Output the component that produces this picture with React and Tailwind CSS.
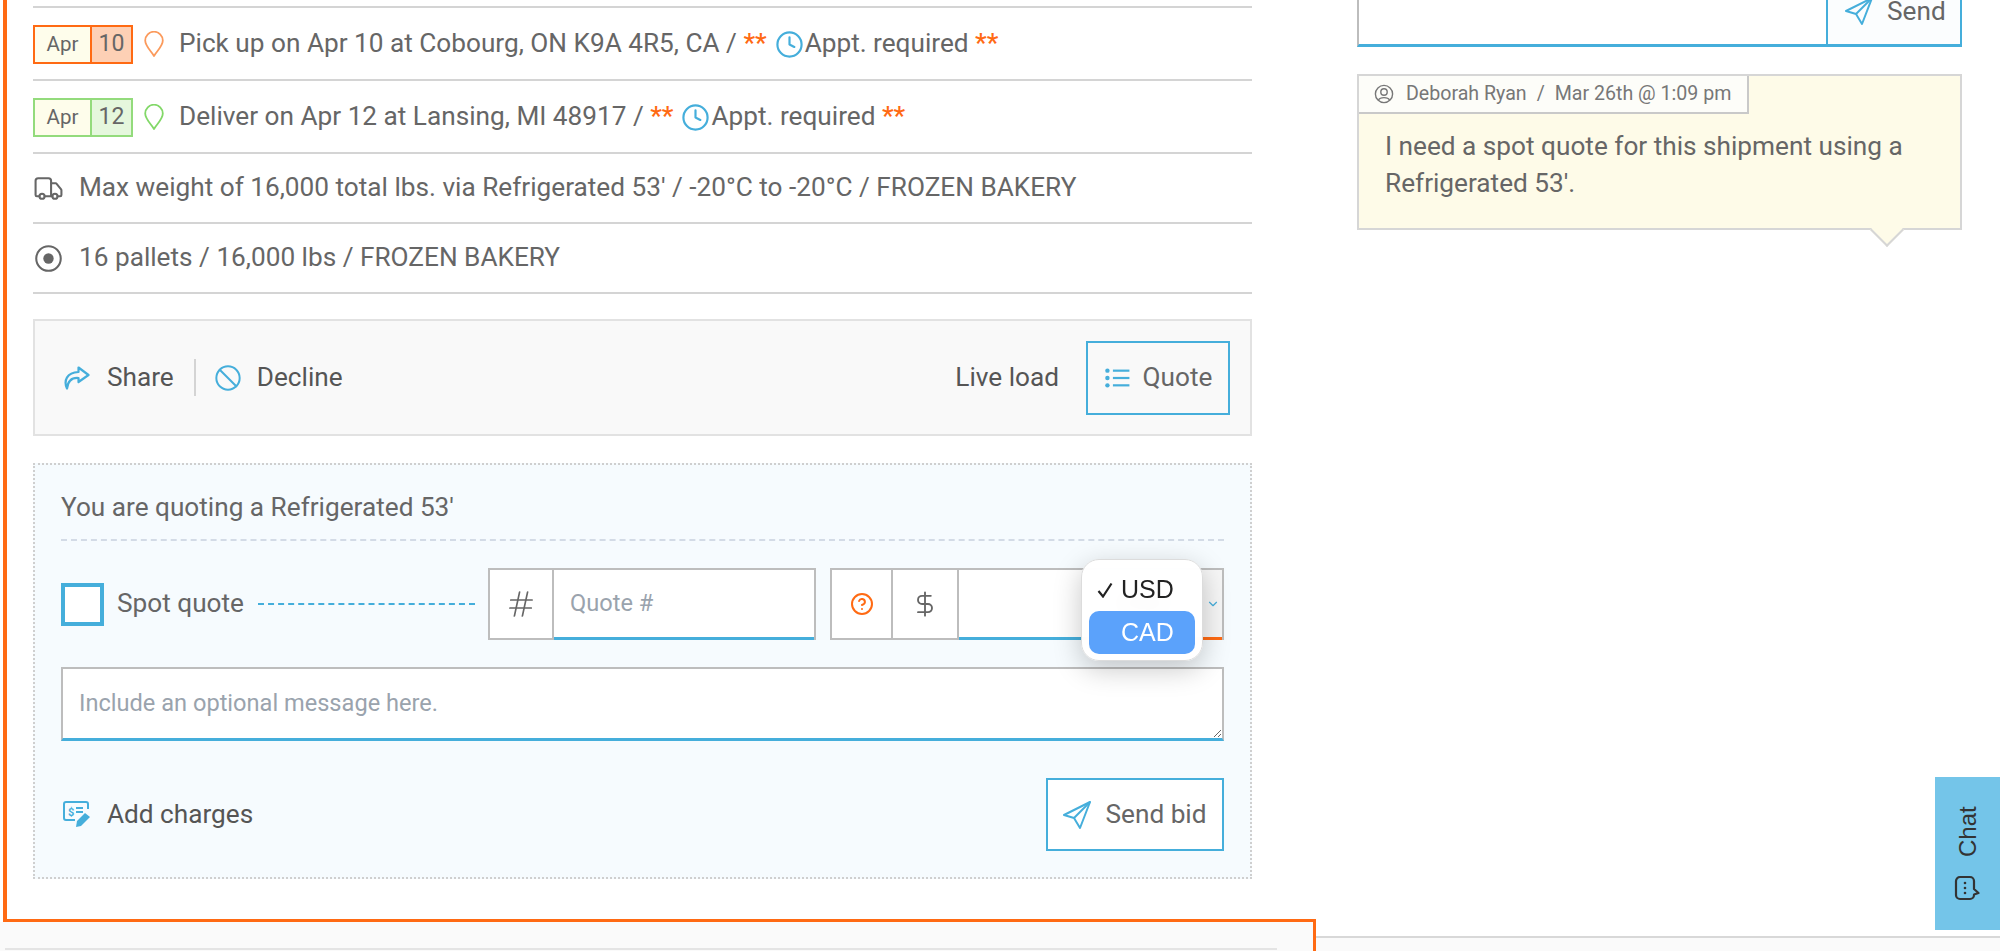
import { Ban, Clock, DollarSign, Hash, CircleHelp, ChevronDown, Truck } from "lucide-react";

function Pin({ className }) {
  return (
    <svg viewBox="0 0 20 26" fill="none" stroke="currentColor" strokeWidth="1.8" className={className}>
      <path d="M10 25 C7 20 1.2 15 1.2 9.5 A8.8 8.8 0 0 1 18.8 9.5 C18.8 15 13 20 10 25 Z" strokeLinejoin="round" />
    </svg>
  );
}

function Plane({ className }) {
  return (
    <svg viewBox="0 0 28 28" fill="none" stroke="currentColor" strokeWidth="2" strokeLinejoin="round" className={className}>
      <path d="M27 1 L1 14 L11 17 L17 27 Z" />
      <path d="M27 1 L11 17" />
    </svg>
  );
}

function ShareArrow({ className }) {
  return (
    <svg viewBox="0 0 26 24" fill="none" stroke="currentColor" strokeWidth="2.2" strokeLinejoin="round" className={className}>
      <path d="M15 1.5 L25 9 L15 16 V12 C9 11.5 4.5 14 3.5 22.5 C0 15 3 6.5 15 6 Z" />
    </svg>
  );
}

function Target({ className }) {
  return (
    <svg viewBox="0 0 26 26" className={className}>
      <circle cx="13" cy="13" r="11.8" fill="none" stroke="currentColor" strokeWidth="2" />
      <circle cx="13" cy="13" r="5" fill="currentColor" />
    </svg>
  );
}

function ListIcon({ className }) {
  return (
    <svg viewBox="0 0 28 24" fill="currentColor" className={className}>
      <circle cx="3" cy="4" r="2.4" />
      <circle cx="3" cy="12" r="2.4" />
      <circle cx="3" cy="20" r="2.4" />
      <rect x="9" y="2.8" width="18" height="2.4" />
      <rect x="9" y="10.8" width="18" height="2.4" />
      <rect x="9" y="18.8" width="18" height="2.4" />
    </svg>
  );
}

function ChargesIcon({ className }) {
  return (
    <svg viewBox="0 0 30 27" fill="none" stroke="currentColor" className={className}>
      <path d="M12 19 H3 A2 2 0 0 1 1 17 V3 A2 2 0 0 1 3 1 H23 A2 2 0 0 1 25 3 V8" strokeWidth="2" />
      <text x="5" y="15" fontSize="11" fontWeight="700" fill="currentColor" stroke="none" fontFamily="Roboto, sans-serif">$</text>
      <path d="M13 7 H20 M13 11 H20" strokeWidth="2" />
      <path d="M22 12 L27 16 L18 25 L13 26 L14 20 Z" fill="currentColor" stroke="none" />
    </svg>
  );
}

function UserCircle({ className }) {
  return (
    <svg viewBox="0 0 20 20" fill="none" stroke="currentColor" strokeWidth="1.4" className={className}>
      <circle cx="10" cy="10" r="8.6" />
      <circle cx="10" cy="8" r="3.2" />
      <path d="M4.5 16 C6 12.8 14 12.8 15.5 16" />
    </svg>
  );
}

function ChatBubble({ className }) {
  return (
    <svg viewBox="0 0 26 26" fill="none" stroke="currentColor" strokeWidth="2.2" strokeLinejoin="round" className={className}>
      <path d="M6 2 H16 A4 4 0 0 1 20 6 V14 L24.5 18 L20 19.5 V20 A4 4 0 0 1 16 24 H6 A4 4 0 0 1 2 20 V6 A4 4 0 0 1 6 2 Z" />
      <circle cx="11" cy="8" r="1.3" fill="currentColor" stroke="none" />
      <circle cx="11" cy="13" r="1.3" fill="currentColor" stroke="none" />
      <circle cx="11" cy="18" r="1.3" fill="currentColor" stroke="none" />
    </svg>
  );
}

function Stars() {
  return <span className="text-[#ff6a13] font-medium">**</span>;
}

function DateBox({ day, outline, fill }) {
  return (
    <div className={`flex h-[39px] w-[100px] shrink-0 border-2 ${outline}`}>
      <span className={`flex w-[57px] items-center justify-center border-r-2 bg-[#fefdeb] text-[20.5px] ${outline}`}>Apr</span>
      <span className={`flex flex-1 items-center justify-center text-[23px] ${fill}`}>{day}</span>
    </div>
  );
}

function StopRow({ day, outline, fill, pin, text }) {
  return (
    <div className="flex h-[73px] items-center border-b-2 border-[#d4d4d4] pt-[1px]">
      <DateBox day={day} outline={outline} fill={fill} />
      <Pin className={`ml-[11px] h-[26px] w-[20px] shrink-0 ${pin}`} />
      <span className="ml-[15px]">{text} / <Stars /></span>
      <Clock className="ml-[8px] h-[29px] w-[29px] text-[#45aedb]" strokeWidth={1.8} />
      <span className="ml-[1px]">Appt. required <Stars /></span>
    </div>
  );
}

function InfoRow({ icon, children }) {
  return (
    <div className="flex h-[70px] items-center gap-[15px] border-b-2 border-[#d4d4d4]">
      {icon}
      <span>{children}</span>
    </div>
  );
}

export default function App() {
  return (
    <div className="flex h-[951px] w-[2000px] overflow-hidden bg-white font-['Roboto',sans-serif] text-[26.2px] text-[#666]">
      <div className="flex w-[1316px] shrink-0 flex-col">
        <main className="ml-[3px] h-[922px] shrink-0 border-b-[3px] border-l-4 border-[#ff6a13] pl-[26px] pr-[64px] pt-[6px]">
          <div className="border-t-2 border-[#d4d4d4]">
            <StopRow day="10" outline="border-[#ff6a13]" fill="bg-[#fdd0b5]" pin="text-[#fb9a5c]" text="Pick up on Apr 10 at Cobourg, ON K9A 4R5, CA" />
            <StopRow day="12" outline="border-[#93db7c]" fill="bg-[#e5f7dd]" pin="text-[#82d868]" text="Deliver on Apr 12 at Lansing, MI 48917" />
            <InfoRow icon={<Truck className="h-[31px] w-[31px] shrink-0" strokeWidth={1.6} />}>
              Max weight of 16,000 total lbs. via Refrigerated 53' / -20°C to -20°C / FROZEN BAKERY
            </InfoRow>
            <InfoRow icon={<Target className="ml-[2px] mr-[2px] h-[27px] w-[27px] shrink-0" />}>
              16 pallets / 16,000 lbs / FROZEN BAKERY
            </InfoRow>
          </div>

          <div className="mt-[25px] flex h-[117px] items-center border-2 border-[#e2e2e2] bg-[#f9f9f9] pl-[28px] pr-[20px] text-[#555]">
            <ShareArrow className="h-[24px] w-[27px] text-[#45aedb]" />
            <span className="ml-[17px]">Share</span>
            <div className="ml-[20px] h-[37px] w-[2px] bg-[#d4d4d4]" />
            <Ban className="ml-[18px] h-[28px] w-[28px] text-[#45aedb]" strokeWidth={1.7} />
            <span className="ml-[15px]">Decline</span>
            <span className="ml-auto">Live load</span>
            <button className="ml-[27px] flex h-[74px] w-[144px] items-center justify-center gap-[12px] border-2 border-[#45aedb] text-[#666]">
              <ListIcon className="h-[22px] w-[27px] text-[#45aedb]" />
              Quote
            </button>
          </div>

          <section className="mt-[27px] h-[416px] border-2 border-dotted border-[#cfcfcf] bg-[#f6fbfe] px-[26px]">
            <div className="flex h-[76px] items-center border-b-2 border-dashed border-[#d3dbe6] pt-[12px]">You are quoting a Refrigerated 53'</div>

            <div className="relative mt-[27px] flex h-[72px] items-center">
              <div className="h-[43px] w-[43px] shrink-0 border-4 border-[#45aedb] bg-white" />
              <span className="ml-[13px]">Spot quote</span>
              <div className="ml-[14px] mr-[13px] flex-1 border-t-2 border-dashed border-[#45aedb]" />
              <div className="flex h-full w-[328px] shrink-0 border-2 border-[#bdbdbd] bg-white">
                <div className="flex w-[64px] items-center justify-center border-r-2 border-[#bdbdbd]">
                  <Hash className="h-[32px] w-[32px] -skew-x-6" strokeWidth={1.3} />
                </div>
                <input readOnly placeholder="Quote #" className="-mb-[2px] min-w-0 flex-1 border-b-[3px] border-[#45aedb] pl-[16px] text-[23.6px] outline-none placeholder:text-[#9aa3ad]" />
              </div>
              <div className="ml-[14px] flex h-full w-[394px] shrink-0 border-2 border-[#bdbdbd] bg-white">
                <div className="flex w-[61px] items-center justify-center border-r-2 border-[#bdbdbd]">
                  <CircleHelp className="h-[24px] w-[24px] text-[#ff6a13]" strokeWidth={2} />
                </div>
                <div className="flex w-[66px] items-center justify-center border-r-2 border-[#bdbdbd]">
                  <DollarSign className="h-[28px] w-[28px]" strokeWidth={1.6} />
                </div>
                <div className="-mb-[2px] flex-1 border-b-[3px] border-[#45aedb]" />
                <div className="-mb-[2px] flex w-[138px] items-center border-b-[3px] border-[#ff6a13] bg-[#f6f6f6] pl-[37px] pr-[2px]">
                  <span className="text-[23.6px] text-[#777]">USD</span>
                  <ChevronDown className="ml-auto h-[14px] w-[14px] text-[#45aedb]" />
                </div>
              </div>
              <div className="absolute left-[1020px] top-[-9px] z-10 flex h-[102px] w-[122px] flex-col rounded-[18px] border border-[#dcdcdc] bg-white/95 px-[7px] pt-[8px] text-[25px] text-[#222] shadow-[0_8px_28px_rgba(0,0,0,0.22)] backdrop-blur-sm font-['Liberation_Sans',sans-serif]">
                <div className="flex h-[43px] items-center pl-[8px]">
                  <svg viewBox="0 0 16 16" fill="none" stroke="currentColor" strokeWidth="2.2" className="h-[16px] w-[16px]">
                    <path d="M1.5 9 L6 14.5 L14.5 1.5" />
                  </svg>
                  <span className="ml-[8px]">USD</span>
                </div>
                <div className="flex h-[43px] items-center rounded-[10px] bg-[#5ba2fb] pl-[32px] text-white">CAD</div>
              </div>
            </div>

            <textarea
              readOnly
              placeholder="Include an optional message here."
              className="mt-[27px] block h-[74px] w-full border-2 border-b-[3px] border-[#bdbdbd] border-b-[#45aedb] bg-white px-[16px] py-[19px] text-[23.6px] leading-[30px] outline-none placeholder:text-[#9aa3ad]"
            />

            <div className="mt-[37px] flex items-center justify-between">
              <div className="ml-[2px] flex items-center gap-[14px] text-[#555]">
                <ChargesIcon className="h-[27px] w-[30px] text-[#45aedb]" />
                Add charges
              </div>
              <button className="flex h-[73px] w-[178px] items-center justify-center gap-[14px] border-2 border-[#45aedb] bg-white">
                <Plane className="h-[28px] w-[28px] text-[#45aedb]" />
                Send bid
              </button>
            </div>
          </section>
        </main>
        <div className="flex-1 border-r-[3px] border-[#ff6a13] bg-[#fafafa] pl-[5px] pr-[36px] pt-[26px]">
          <div className="h-full border-t-2 border-[#e4e4e4]" />
        </div>
      </div>

      <aside className="relative flex-1 bg-[#fafafa]">
        <div className="h-[938px] border-b-2 border-[#d8d8d8] bg-white pl-[41px] pr-[38px]">
          <div className="flex h-[47px] border-b-[3px] border-l-2 border-[#bdbdbd] border-b-[#45aedb] bg-white">
            <div className="flex-1" />
            <button className="-mb-[3px] flex w-[136px] items-start gap-[14px] border-x-2 border-b-[3px] border-[#45aedb] bg-[#fbfdfe] pl-[17px]">
              <Plane className="-mt-[3px] h-[28px] w-[28px] shrink-0 text-[#45aedb]" />
              <span className="leading-[22px]">Send</span>
            </button>
          </div>

          <div className="relative mt-[27px] h-[156px] border-2 border-[#d6d6d6] bg-[#fefbe8]">
            <div className="flex h-[38px] w-[390px] items-center border-b-2 border-r-2 border-[#c9c9c9] bg-[#fdfdf9] pl-[15px] text-[19.6px] text-[#777]">
              <UserCircle className="h-[20px] w-[20px]" />
              <span className="ml-[12px]">Deborah Ryan</span>
              <span className="ml-[10px]">/</span>
              <span className="ml-[10px]">Mar 26th @ 1:09 pm</span>
            </div>
            <p className="pl-[26px] pr-[30px] pt-[14px] leading-[37px]">I need a spot quote for this shipment using a Refrigerated 53'.</p>
            <div className="absolute bottom-[-14px] left-[516px] h-[24px] w-[24px] rotate-45 border-b-2 border-r-2 border-[#d6d6d6] bg-[#fefbe8]" />
          </div>
        </div>

        <div className="absolute left-[619px] top-[777px] flex h-[153px] w-[65px] items-center justify-center gap-[18px] bg-[#74c5e9] font-['Liberation_Sans',sans-serif] text-[24px] text-[#333] [writing-mode:vertical-rl] rotate-180">
          <ChatBubble className="h-[26px] w-[26px] rotate-180" />
          Chat
        </div>
      </aside>
    </div>
  );
}
